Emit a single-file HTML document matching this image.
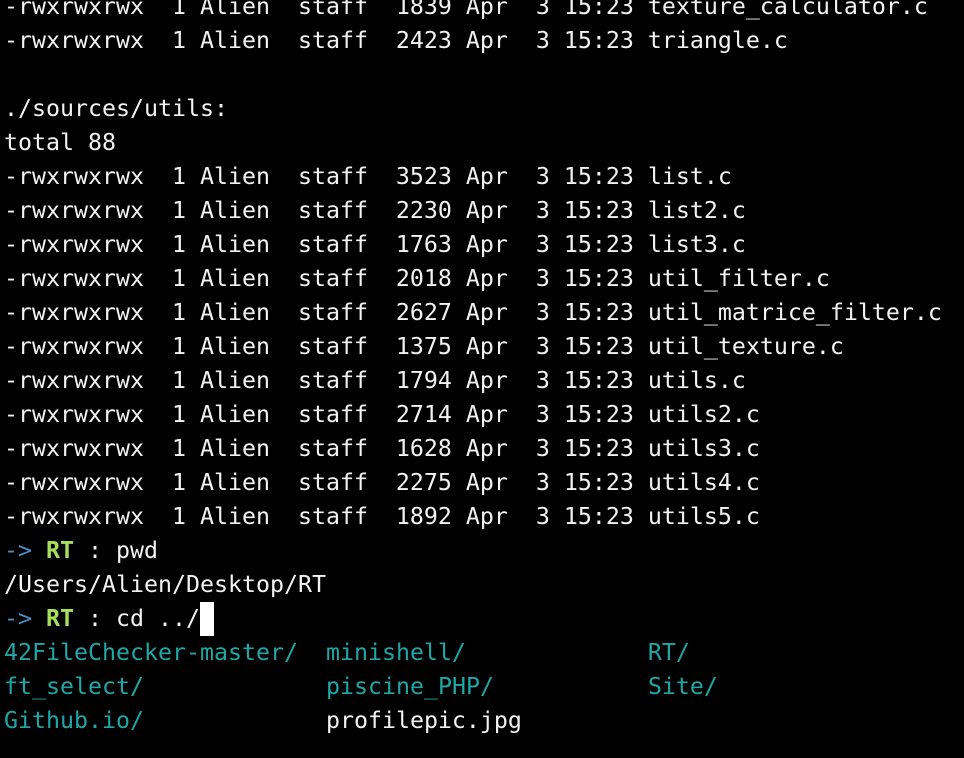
<!DOCTYPE html>
<html><head><meta charset="utf-8"><style>
html,body{margin:0;padding:0;background:#000;width:964px;height:758px;overflow:hidden}
pre{position:absolute;left:4px;top:-10px;margin:0;font-family:"DejaVu Sans Mono","Liberation Mono",monospace;font-size:23.25px;line-height:34px;color:#f2f2f2}
.a{color:#4a8ec4}.g{color:#a6e05a;font-weight:bold}.t{color:#1fa7a7}
.c{background:#fff;color:#fff;display:inline-block;width:14px;height:34px;vertical-align:top}
</style></head><body><pre>-rwxrwxrwx  1 Alien  staff  1839 Apr  3 15:23 texture_calculator.c
-rwxrwxrwx  1 Alien  staff  2423 Apr  3 15:23 triangle.c

./sources/utils:
total 88
-rwxrwxrwx  1 Alien  staff  3523 Apr  3 15:23 list.c
-rwxrwxrwx  1 Alien  staff  2230 Apr  3 15:23 list2.c
-rwxrwxrwx  1 Alien  staff  1763 Apr  3 15:23 list3.c
-rwxrwxrwx  1 Alien  staff  2018 Apr  3 15:23 util_filter.c
-rwxrwxrwx  1 Alien  staff  2627 Apr  3 15:23 util_matrice_filter.c
-rwxrwxrwx  1 Alien  staff  1375 Apr  3 15:23 util_texture.c
-rwxrwxrwx  1 Alien  staff  1794 Apr  3 15:23 utils.c
-rwxrwxrwx  1 Alien  staff  2714 Apr  3 15:23 utils2.c
-rwxrwxrwx  1 Alien  staff  1628 Apr  3 15:23 utils3.c
-rwxrwxrwx  1 Alien  staff  2275 Apr  3 15:23 utils4.c
-rwxrwxrwx  1 Alien  staff  1892 Apr  3 15:23 utils5.c
<span class="a">-&gt;</span> <span class="g">RT</span> : pwd
/Users/Alien/Desktop/RT
<span class="a">-&gt;</span> <span class="g">RT</span> : cd ../<span class="c"> </span>
<span class="t">42FileChecker-master/</span>  <span class="t">minishell/</span>             <span class="t">RT/</span>
<span class="t">ft_select/</span>             <span class="t">piscine_PHP/</span>           <span class="t">Site/</span>
<span class="t">Github.io/</span>             profilepic.jpg
</pre></body></html>
